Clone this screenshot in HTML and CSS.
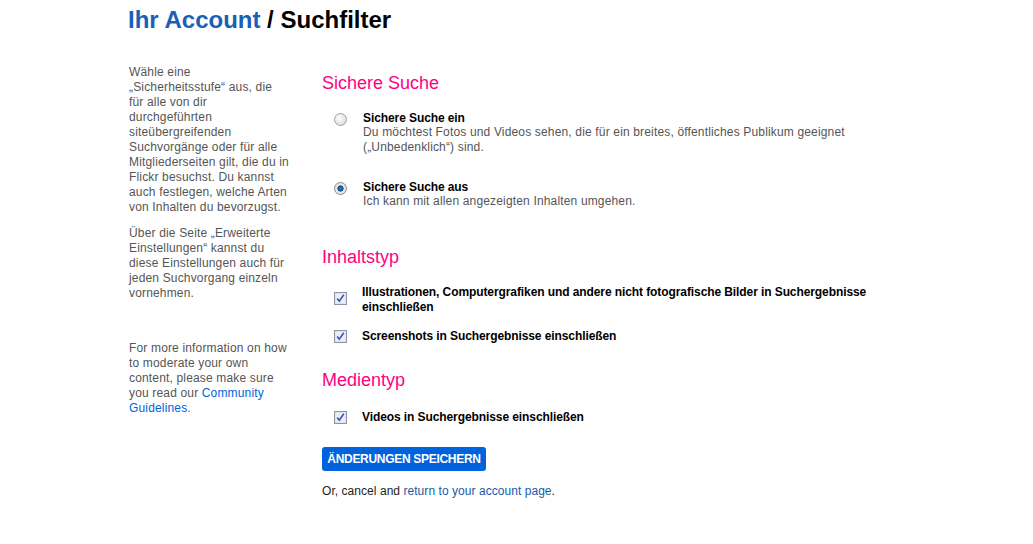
FILE: index.html
```html
<!DOCTYPE html>
<html lang="de">
<head>
<meta charset="utf-8">
<title>Suchfilter</title>
<link rel="stylesheet" href="styles.css">
</head>
<body>
<div class="page">
  <h1 class="title"><a class="title-link" href="#">Ihr Account</a> / Suchfilter</h1>
  <div class="layout">
    <aside class="side">
      <p class="side-p">Wähle eine<br>„Sicherheitsstufe“ aus, die<br>für alle von dir durchgeführten siteübergreifenden Suchvorgänge oder für alle Mitgliederseiten gilt, die du in Flickr besuchst. Du kannst auch festlegen, welche Arten von Inhalten du bevorzugst.</p>
      <p class="side-p">Über die Seite „Erweiterte Einstellungen“ kannst du diese Einstellungen auch für jeden Suchvorgang einzeln vornehmen.</p>
      <p class="side-p side-more">For more information on how to moderate your own content, please make sure you read our <a class="blue" href="#">Community Guidelines</a>.</p>
    </aside>
    <main class="main">
      <h2 class="sec-h first">Sichere Suche</h2>
      <div class="opt radio-row">
        <span class="radio"></span>
        <div class="opt-text">
          <div class="opt-label">Sichere Suche ein</div>
          <div class="opt-desc">Du möchtest Fotos und Videos sehen, die für ein breites, öffentliches Publikum geeignet („Unbedenklich“) sind.</div>
        </div>
      </div>
      <div class="opt radio-row second">
        <span class="radio on"></span>
        <div class="opt-text">
          <div class="opt-label">Sichere Suche aus</div>
          <div class="opt-desc">Ich kann mit allen angezeigten Inhalten umgehen.</div>
        </div>
      </div>

      <h2 class="sec-h after-radio">Inhaltstyp</h2>
      <div class="opt check-row">
        <svg class="check" width="13" height="13" viewBox="0 0 13 13"><rect x="0.5" y="0.5" width="12" height="12" fill="#eceef3" stroke="#8e96a6"/><rect x="1.5" y="1.5" width="10" height="10" fill="none" stroke="#dfe3ea"/><path d="M3.2 6.4 L5.3 9.2 L9.8 2.8" fill="none" stroke="#3157b8" stroke-width="1.6"/></svg>
        <div class="opt-label">Illustrationen, Computergrafiken und andere nicht fotografische Bilder in Suchergebnisse einschließen</div>
      </div>
      <div class="opt check-row second-check">
        <svg class="check single" width="13" height="13" viewBox="0 0 13 13"><rect x="0.5" y="0.5" width="12" height="12" fill="#eceef3" stroke="#8e96a6"/><rect x="1.5" y="1.5" width="10" height="10" fill="none" stroke="#dfe3ea"/><path d="M3.2 6.4 L5.3 9.2 L9.8 2.8" fill="none" stroke="#3157b8" stroke-width="1.6"/></svg>
        <div class="opt-label">Screenshots in Suchergebnisse einschließen</div>
      </div>

      <h2 class="sec-h after-check">Medientyp</h2>
      <div class="opt check-row video-row">
        <svg class="check single" width="13" height="13" viewBox="0 0 13 13"><rect x="0.5" y="0.5" width="12" height="12" fill="#eceef3" stroke="#8e96a6"/><rect x="1.5" y="1.5" width="10" height="10" fill="none" stroke="#dfe3ea"/><path d="M3.2 6.4 L5.3 9.2 L9.8 2.8" fill="none" stroke="#3157b8" stroke-width="1.6"/></svg>
        <div class="opt-label">Videos in Suchergebnisse einschließen</div>
      </div>

      <button class="save" type="button">ÄNDERUNGEN SPEICHERN</button>
      <p class="cancel">Or, cancel and <a class="dark-link" href="#">return to your account page</a>.</p>
    </main>
  </div>
</div>
</body>
</html>
```

FILE: styles.css
```css
html, body {
  margin: 0;
  padding: 0;
  background: #fff;
}
body {
  font-family: Arial, "Liberation Sans", Helvetica, sans-serif;
  font-size: 12px;
  color: #222;
}
.page {
  padding: 6px 0 0 128px;
}
.title {
  margin: 0;
  font-size: 24px;
  line-height: 28px;
  font-weight: bold;
  color: #000;
}
.title-link {
  color: #1a61b6;
  text-decoration: none;
}
.layout {
  display: grid;
  grid-template-columns: 194px 600px;
  margin-top: 31px;
}
.side {
  width: 163px;
  padding-left: 1px;
}
.side-p {
  margin: 0 0 11px;
  line-height: 15px;
  color: #555;
  letter-spacing: 0.16px;
}
.side-more {
  margin-top: 40px;
}
.blue {
  color: #0063dc;
  text-decoration: none;
}
.main {
  display: flex;
  flex-direction: column;
  align-items: flex-start;
}
.sec-h {
  margin: 0;
  font-size: 18px;
  line-height: 22px;
  font-weight: normal;
  color: #ff0084;
}
.first { margin-top: 7px; }
.after-radio { margin-top: 37px; }
.after-check { margin-top: 25px; }
.opt {
  display: flex;
  align-items: flex-start;
}
.radio-row {
  margin-top: 17px;
  padding-left: 12px;
}
.radio-row.second { margin-top: 25px; }
.radio {
  width: 13px;
  height: 13px;
  border-radius: 50%;
  box-sizing: border-box;
  border: 1px solid #a2a2a2;
  background: radial-gradient(circle at 40% 35%, #fdfdfd 0%, #e0e0e0 70%, #cfcfcf 100%);
  margin-top: 2px;
  margin-right: 16px;
  flex: none;
}
.radio.on {
  border-color: #8c8c8c;
  background: radial-gradient(circle at 50% 50%, #2b7fc8 0%, #0e5d9e 28%, #1a4f80 36%, #ececec 44%, #d8d8d8 100%);
}
.opt-text {
  display: flex;
  flex-direction: column;
}
.opt-label {
  font-weight: bold;
  color: #000;
  line-height: 14px;
  letter-spacing: -0.09px;
}
.opt-desc {
  color: #555;
  line-height: 15px;
  width: 520px;
  letter-spacing: 0.16px;
}
.check-row {
  margin-top: 17px;
  padding-left: 12px;
}
.check-row .opt-label {
  line-height: 15px;
  width: 520px;
}
.second-check { margin-top: 14px; }
.video-row { margin-top: 19px; }
.check {
  flex: none;
  margin-top: 7px;
  margin-right: 15px;
}
.check.single { margin-top: 1px; }
.save {
  margin-top: 22px;
  height: 24px;
  width: 164px;
  padding: 0;
  border: none;
  border-radius: 3px;
  background: #0063dc;
  color: #fff;
  font-family: Arial, "Liberation Sans", sans-serif;
  font-size: 12px;
  font-weight: bold;
  letter-spacing: -0.3px;
  white-space: nowrap;
  text-align: center;
}
.cancel {
  margin: 13px 0 0;
  line-height: 15px;
  color: #222;
  letter-spacing: 0.05px;
}
.dark-link {
  color: #1a5aa8;
  text-decoration: none;
}
```
